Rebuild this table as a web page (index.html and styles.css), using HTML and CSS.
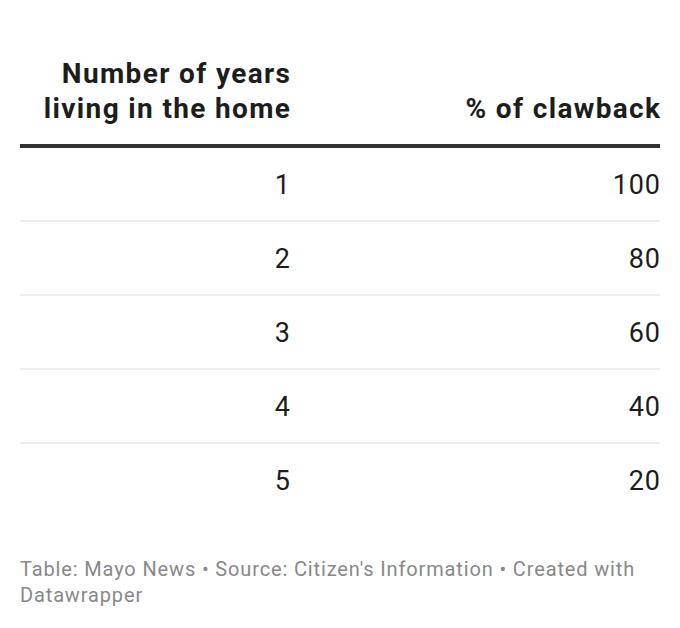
FILE: index.html
```html
<!DOCTYPE html>
<html>
<head>
<meta charset="utf-8">
<link rel="stylesheet" href="styles.css">
</head>
<body>
<div class="chart">
  <div class="table">
    <div class="row head">
      <div class="cell c1">Number of years<br>living in the home</div>
      <div class="cell c2">% of clawback</div>
    </div>
    <div class="row"><div class="cell c1">1</div><div class="cell c2">100</div></div>
    <div class="row"><div class="cell c1">2</div><div class="cell c2">80</div></div>
    <div class="row"><div class="cell c1">3</div><div class="cell c2">60</div></div>
    <div class="row"><div class="cell c1">4</div><div class="cell c2">40</div></div>
    <div class="row last"><div class="cell c1">5</div><div class="cell c2">20</div></div>
  </div>
  <div class="footer">Table: Mayo News • Source: Citizen's Information • Created with Datawrapper</div>
</div>
</body>
</html>
```
FILE: styles.css
```css
html, body {
  margin: 0;
  padding: 0;
  background: #ffffff;
}
.chart {
  padding: 56px 20px 0 20px;
  font-family: Roboto, "Liberation Sans", sans-serif;
}
.table {
  display: flex;
  flex-direction: column;
}
.row {
  display: grid;
  grid-template-columns: 270px 1fr;
  border-bottom: 2px solid #eeeeee;
  padding: 20px 0 17px 0;
  font-size: 27px;
  line-height: 35px;
  letter-spacing: 0.8px;
  color: #1d1d1d;
}
.row .cell {
  margin-right: -0.8px;
}
.row.head {
  font-size: 28px;
  font-weight: 700;
  letter-spacing: 1.35px;
  border-bottom: 4px solid #333333;
  padding: 0 0 18px 0;
  align-items: end;
}
.row.head .cell {
  margin-right: -1.35px;
}
.row.last {
  border-bottom: none;
}
.cell {
  text-align: right;
}
.footer {
  margin-top: 40px;
  font-size: 20px;
  line-height: 26px;
  letter-spacing: 0.86px;
  color: #888888;
}
```
